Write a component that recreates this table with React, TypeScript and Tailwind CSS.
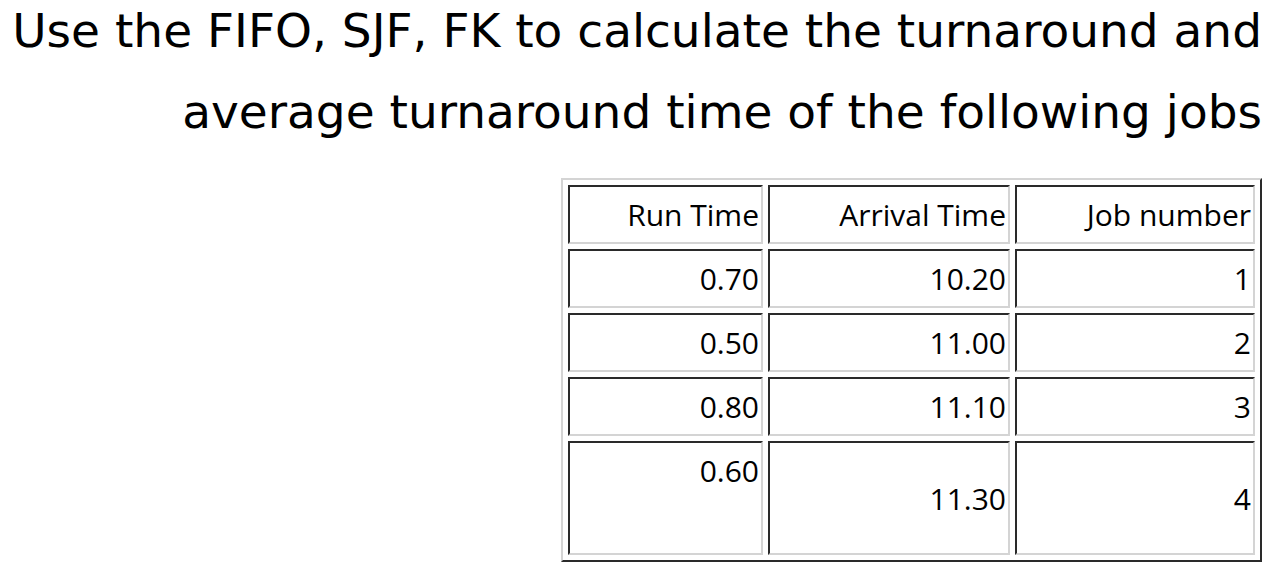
export default function App() {
  const rows = [
    ["0.70", "10.20", "1"],
    ["0.50", "11.00", "2"],
    ["0.80", "11.10", "3"],
  ];
  const td =
    "border-2 border-t-[#2a2a2a] border-l-[#2a2a2a] border-b-[#d4d4d4] border-r-[#d4d4d4] text-right align-middle px-[2px] py-[7px] leading-[41px]";
  return (
    <div className="w-[1280px] h-[584px] bg-white text-black overflow-hidden">
      <h1
        className="text-right pr-[18px] -mt-[10px] text-[47px] leading-[81px] font-normal"
        style={{ fontFamily: '"DejaVu Sans", sans-serif' }}
      >
        Use the FIFO, SJF, FK to calculate the turnaround and
        <br />
        average turnaround time of the following jobs
      </h1>
      <div className="flex justify-end pr-[18px] mt-[26px]">
        <table
          className="border-separate border-spacing-[5px] border-2 border-t-[#d4d4d4] border-l-[#d4d4d4] border-b-[#2a2a2a] border-r-[#2a2a2a] text-[30px]"
          style={{ fontFamily: '"Open Sans", sans-serif' }}
        >
          <tbody>
            <tr>
              <td className={td + " w-[195px]"}>Run Time</td>
              <td className={td + " w-[242px]"}>Arrival Time</td>
              <td className={td + " w-[240px]"}>Job number</td>
            </tr>
            {rows.map((r, i) => (
              <tr key={i}>
                {r.map((c, j) => (
                  <td key={j} className={td}>
                    {c}
                  </td>
                ))}
              </tr>
            ))}
            <tr>
              <td className={td + " !align-top h-[114px]"}>0.60</td>
              <td className={td}>11.30</td>
              <td className={td}>4</td>
            </tr>
          </tbody>
        </table>
      </div>
    </div>
  );
}
